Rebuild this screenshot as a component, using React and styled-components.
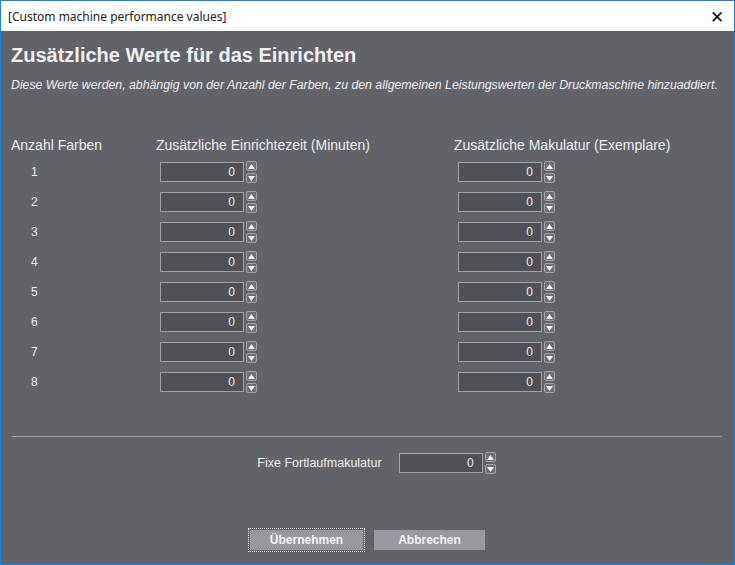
import React from "react";
import styled, { createGlobalStyle } from "styled-components";

const G = createGlobalStyle`
  html,body{margin:0;padding:0;background:#626269;}
  *{box-sizing:border-box;}
`;
const Win = styled.div`
  width:735px;height:565px;border:1px solid #1883d7;display:flex;flex-direction:column;
  font-family:"Liberation Sans",Arial,sans-serif;background:#626269;color:#eee;
`;
const TitleBar = styled.div`
  height:30px;background:#fff;display:flex;align-items:center;justify-content:space-between;
  padding:0 10px 0 7px;color:#222;font-family:"Segoe UI","Noto Sans",sans-serif;font-size:12px;
`;
const Close = styled.span`font-size:17px;color:#111;font-weight:300;`;
const Body = styled.div`flex:1;padding:10px 10px 0 10px;display:flex;flex-direction:column;`;
const H = styled.div`font-size:20px;font-weight:bold;color:#f0f0f0;margin-top:3px;`;
const Sub = styled.div`font-size:12.3px;font-style:italic;color:#eee;margin-top:11px;white-space:nowrap;`;
const Grid = styled.div`
  display:grid;grid-template-columns:145px 298px 1fr;margin-top:45px;row-gap:8px;align-items:center;
`;
const Head = styled.div`font-size:14px;color:#eee;`;
const Num = styled.div`font-size:12px;padding-left:20px;color:#eee;`;
const SpinWrap = styled.div`display:flex;align-items:center;gap:2px;padding-left:${p=>p.$pl||0}px;`;
const Input = styled.div`
  width:${p=>p.$w||84}px;height:20px;background:#505057;border:1px solid #a3a3a7;
  text-align:right;padding-right:8px;font-size:12px;line-height:18px;color:#eee;
`;
const Arrows = styled.div`display:flex;flex-direction:column;gap:2px;`;
const Arr = styled.div`
  width:11px;height:10px;border:1px solid #a3a3a7;border-radius:2px;background:#6e6e74;
  display:flex;align-items:center;justify-content:center;
`;
const Sep = styled.div`height:1px;background:#a3a3a7;margin:43px 2px 0 1px;`;
const FixRow = styled.div`display:flex;align-items:center;justify-content:center;gap:17px;margin-top:15px;padding-left:18px;font-size:12.5px;`;
const Btns = styled.div`display:flex;justify-content:center;gap:11px;margin-top:56px;`;
const Btn = styled.div`
  width:${p=>p.$w}px;height:20px;background:#98989e;color:#f4f4f4;font-weight:bold;font-size:12px;
  display:flex;align-items:center;justify-content:center;
  outline:${p=>p.$focus?"1px dotted #fff":"none"};outline-offset:1px;
`;

const Tri = ({up}) => (
  <svg width="7" height="5" viewBox="0 0 7 5">
    <polygon points={up?"0,5 7,5 3.5,0":"0,0 7,0 3.5,5"} fill="#f4f4f4"/>
  </svg>
);
const Spin = ({pl,w}) => (
  <SpinWrap $pl={pl}>
    <Input $w={w}>0</Input>
    <Arrows><Arr><Tri up/></Arr><Arr><Tri/></Arr></Arrows>
  </SpinWrap>
);

export default function App(){
  return (<><G/>
    <Win>
      <TitleBar><span>[Custom machine performance values]</span><Close>✕</Close></TitleBar>
      <Body>
        <H>Zusätzliche Werte für das Einrichten</H>
        <Sub>Diese Werte werden, abhängig von der Anzahl der Farben, zu den allgemeinen Leistungswerten der Druckmaschine hinzuaddiert.</Sub>
        <Grid>
          <Head>Anzahl Farben</Head>
          <Head>Zusätzliche Einrichtezeit (Minuten)</Head>
          <Head>Zusätzliche Makulatur (Exemplare)</Head>
          {[1,2,3,4,5,6,7,8].map(n=>(
            <React.Fragment key={n}>
              <Num>{n}</Num>
              <Spin pl={4}/>
              <Spin pl={4}/>
            </React.Fragment>
          ))}
        </Grid>
        <Sep/>
        <FixRow><span>Fixe Fortlaufmakulatur</span><Spin w={84}/></FixRow>
        <Btns><Btn $w={113} $focus>Übernehmen</Btn><Btn $w={111}>Abbrechen</Btn></Btns>
      </Body>
    </Win>
  </>);
}
